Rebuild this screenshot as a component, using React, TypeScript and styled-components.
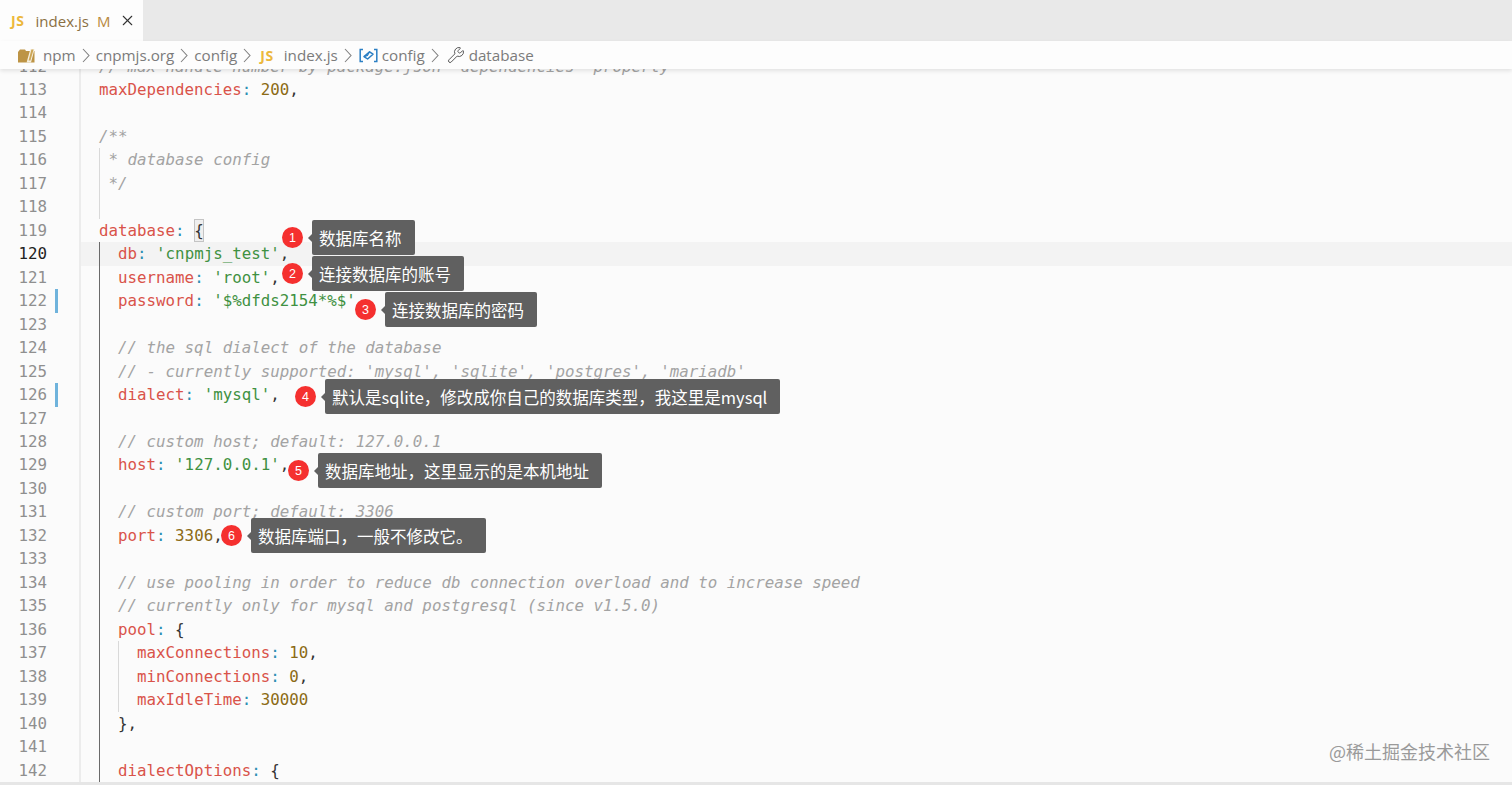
import React from 'react';
import styled, { createGlobalStyle } from 'styled-components';
import { Wrench, X } from 'lucide-react';

const Global = createGlobalStyle`
  html, body { margin: 0; padding: 0; height: 100%; overflow: hidden; background: #fbfbfb; }
  #root { height: 100%; }
`;

const uiFont = `"Open Sans", "Noto Sans", sans-serif`;
const cjkFont = `"Noto Sans CJK SC", "Noto Sans", sans-serif`;

const Page = styled.div`
  position: relative;
  display: flex;
  flex-direction: column;
  height: 785px;
  overflow: hidden;
  background: #fbfbfb;
`;

const TabBar = styled.div`
  display: flex;
  flex: none;
  height: 41px;
  background: #e9e9e9;
`;

const Tab = styled.div`
  display: flex;
  align-items: center;
  width: 143px;
  padding-left: 11px;
  box-sizing: border-box;
  background: #fdfdfd;
  font: 15px ${uiFont};
  color: #8f6c33;
`;

const JsMark = styled.span`
  font: 700 14px ${uiFont};
  color: #ecb83c;
  letter-spacing: 0.6px;
`;

const TabName = styled.span`
  margin-left: 11px;
  color: #8a6f42;
`;

const TabFlag = styled.span`
  margin-left: 8px;
  color: #b8893f;
`;

const TabClose = styled.span`
  display: flex;
  margin-left: 9px;
  color: #333;
`;

const Crumbs = styled.div`
  position: relative;
  z-index: 2;
  display: flex;
  flex: none;
  align-items: center;
  height: 28px;
  padding-left: 18px;
  background: #fdfdfd;
  box-shadow: 0 2px 4px rgba(0, 0, 0, 0.1);
  font: 15.2px ${uiFont};
  color: #7b7b7b;
`;

const CrumbGap = styled.span`
  display: flex;
  justify-content: center;
  width: 20px;
  color: #808080;
`;

const CrumbIcon = styled.span<{ $gap: number; $lead?: number }>`
  display: flex;
  align-items: center;
  margin-left: ${p => p.$lead ?? 0}px;
  margin-right: ${p => p.$gap}px;
`;

const Editor = styled.div`
  flex: 1;
  min-height: 0;
  overflow: hidden;
`;

const Lines = styled.div`
  margin-top: -14.5px;
`;

const Row = styled.div`
  display: flex;
  height: 23.48px;
  font: 15.8px/23.48px "DejaVu Sans Mono", monospace;
  white-space: pre;
`;

const Num = styled.span<{ $active?: boolean }>`
  flex: none;
  width: 47px;
  text-align: right;
  color: ${p => (p.$active ? '#222222' : '#8f8f8f')};
`;

const Diff = styled.span<{ $on?: boolean }>`
  flex: none;
  width: 3px;
  margin: 0 23px 0 8px;
  background: ${p => (p.$on ? '#6fb3dc' : 'transparent')};
`;

const Code = styled.div<{ $active?: boolean }>`
  display: flex;
  flex: 1;
  padding-left: 18px;
  border-left: 2px solid #ececec;
  margin-left: -2px;
  background: ${p => (p.$active ? '#f3f3f3' : 'transparent')};
`;

const Indent = styled.span<{ $guide: Guide }>`
  flex: none;
  width: 19.04px;
  box-sizing: border-box;
  border-left: 1px solid ${p => (p.$guide === 'dark' ? '#6a6a6a' : '#d9d9d9')};
`;

const HairGuide = styled.span`
  flex: none;
  width: 1px;
  margin-right: -1px;
  background: #d9d9d9;
`;

const Tok = styled.span<{ $k: TokenKind }>`
  color: ${p => tokenColors[p.$k]};
  font-style: ${p => (p.$k === 'c' ? 'italic' : 'normal')};
`;

const Bracket = styled.span`
  box-sizing: border-box;
  height: 23px;
  background: #efefef;
  outline: 1px solid #c4c4c4;
  outline-offset: -1px;
  color: #333333;
`;

const Note = styled.div<{ $x: number; $y: number }>`
  position: absolute;
  z-index: 3;
  left: ${p => p.$x}px;
  top: ${p => p.$y}px;
  display: flex;
  align-items: center;
  gap: 9px;
`;

const Badge = styled.span`
  display: flex;
  align-items: center;
  justify-content: center;
  width: 21px;
  height: 21px;
  border-radius: 50%;
  background: #f5302f;
  color: #ffffff;
  font: 12.5px "Liberation Sans", sans-serif;
`;

const Bubble = styled.span`
  position: relative;
  display: flex;
  align-items: center;
  height: 35px;
  padding: 0 13px 0 7px;
  border-radius: 2px;
  background: #606060;
  color: #ffffff;
  font: 16.5px ${cjkFont};
  white-space: nowrap;
  &::before {
    content: '';
    position: absolute;
    left: -4px;
    top: 50%;
    margin-top: -4px;
    border-style: solid;
    border-width: 4px 4px 4px 0;
    border-color: transparent #606060 transparent transparent;
  }
`;

const Watermark = styled.div`
  position: absolute;
  z-index: 3;
  right: 22px;
  top: 738px;
  font: 18px ${cjkFont};
  color: #9a9a9a;
  white-space: nowrap;
`;

const BottomStrip = styled.div`
  position: absolute;
  z-index: 3;
  left: 0;
  right: 0;
  bottom: 0;
  height: 3px;
  background: #e6e6e6;
`;

type TokenKind = 'k' | 's' | 'n' | 'p' | 'c' | 'x';
type Guide = 'dark' | 'light';

const tokenColors: Record<TokenKind, string> = {
  k: '#d9534a',
  s: '#3f9142',
  n: '#8b6a14',
  p: '#2c8fb3',
  c: '#a3a3a3',
  x: '#333333',
};

type Tk = [TokenKind, string];
interface Line {
  n: number;
  guides?: Guide[];
  hair?: boolean;
  tokens?: Tk[];
  bracket?: boolean;
  diff?: boolean;
  active?: boolean;
}

const D: Guide[] = ['dark'];

const kv = (key: string, kind: TokenKind, val: string, tail = ','): Tk[] => [
  ['k', key],
  ['p', ': '],
  [kind, val],
  ['x', tail],
];
const c = (t: string): Tk[] => [['c', t]];

const lines: Line[] = [
  { n: 112, tokens: c('// max handle number by package.json `dependencies` property') },
  { n: 113, tokens: kv('maxDependencies', 'n', '200') },
  { n: 114 },
  { n: 115, tokens: c('/**') },
  { n: 116, hair: true, tokens: c(' * database config') },
  { n: 117, hair: true, tokens: c(' */') },
  { n: 118, hair: true },
  { n: 119, tokens: [['k', 'database'], ['p', ': ']], bracket: true },
  { n: 120, guides: D, active: true, tokens: kv('db', 's', "'cnpmjs_test'") },
  { n: 121, guides: D, tokens: kv('username', 's', "'root'") },
  { n: 122, guides: D, diff: true, tokens: [['k', 'password'], ['p', ': '], ['s', "'$%dfds2154*%$'"]] },
  { n: 123, guides: D },
  { n: 124, guides: D, tokens: c('// the sql dialect of the database') },
  { n: 125, guides: D, tokens: c("// - currently supported: 'mysql', 'sqlite', 'postgres', 'mariadb'") },
  { n: 126, guides: D, diff: true, tokens: kv('dialect', 's', "'mysql'") },
  { n: 127, guides: D },
  { n: 128, guides: D, tokens: c('// custom host; default: 127.0.0.1') },
  { n: 129, guides: D, tokens: kv('host', 's', "'127.0.0.1'") },
  { n: 130, guides: D },
  { n: 131, guides: D, tokens: c('// custom port; default: 3306') },
  { n: 132, guides: D, tokens: kv('port', 'n', '3306') },
  { n: 133, guides: D },
  { n: 134, guides: D, tokens: c('// use pooling in order to reduce db connection overload and to increase speed') },
  { n: 135, guides: D, tokens: c('// currently only for mysql and postgresql (since v1.5.0)') },
  { n: 136, guides: D, tokens: [['k', 'pool'], ['p', ': '], ['x', '{']] },
  { n: 137, guides: ['dark', 'light'], tokens: kv('maxConnections', 'n', '10') },
  { n: 138, guides: ['dark', 'light'], tokens: kv('minConnections', 'n', '0') },
  { n: 139, guides: ['dark', 'light'], tokens: [['k', 'maxIdleTime'], ['p', ': '], ['n', '30000']] },
  { n: 140, guides: D, tokens: [['x', '},']] },
  { n: 141, guides: D },
  { n: 142, guides: D, tokens: [['k', 'dialectOptions'], ['p', ': '], ['x', '{']] },
];

const notes = [
  { i: 1, x: 282, y: 220, text: '数据库名称' },
  { i: 2, x: 282, y: 256, text: '连接数据库的账号' },
  { i: 3, x: 355, y: 292, text: '连接数据库的密码' },
  { i: 4, x: 295, y: 379, text: '默认是sqlite，修改成你自己的数据库类型，我这里是mysql' },
  { i: 5, x: 288, y: 453, text: '数据库地址，这里显示的是本机地址' },
  { i: 6, x: 221, y: 518, text: '数据库端口，一般不修改它。' },
];

const PackageIcon = () => (
  <svg width="17" height="15" viewBox="0 0 17 15">
    <path d="M0 4 L2 1.5 H7 L8 3 H16.5 V14.5 H0 Z" fill="#bd9445" />
    <path d="M8.6 14.5 L12.4 1 H16.6 L13 14.5 Z" fill="#f6f0e0" />
    <path d="M13.4 1.6 H15.6 L12.4 12.6 H10.6 Z" fill="#cda655" />
  </svg>
);

const FieldIcon = () => (
  <svg width="19" height="15" viewBox="0 0 19 15" fill="none">
    <path d="M4 1.5 H1.2 V13.5 H4 M15 1.5 H17.8 V13.5 H15" stroke="#2b7fc4" strokeWidth="1.5" />
    <path d="M5 8.6 L10.6 3.8 L14 6.2 L8.6 11 Z" stroke="#2b7fc4" strokeWidth="1.5" strokeLinejoin="round" />
    <path d="M5 8.6 L8.4 7.4 L10.6 3.8" stroke="#2b7fc4" strokeWidth="1.2" />
  </svg>
);

const Chevron = () => (
  <CrumbGap>
    <svg width="8" height="15" viewBox="0 0 8 15" fill="none">
      <path d="M1 1 L7 7.5 L1 14" stroke="currentColor" strokeWidth="1.1" />
    </svg>
  </CrumbGap>
);

export default function App() {
  return (
    <Page>
      <Global />
      <TabBar>
        <Tab>
          <JsMark>JS</JsMark>
          <TabName>index.js</TabName>
          <TabFlag>M</TabFlag>
          <TabClose>
            <X size={17} strokeWidth={1.5} />
          </TabClose>
        </Tab>
      </TabBar>
      <Crumbs>
        <CrumbIcon $gap={8}>
          <PackageIcon />
        </CrumbIcon>
        <span>npm</span>
        <Chevron />
        <span>cnpmjs.org</span>
        <Chevron />
        <span>config</span>
        <Chevron />
        <CrumbIcon $lead={3} $gap={10}>
          <JsMark>JS</JsMark>
        </CrumbIcon>
        <span>index.js</span>
        <Chevron />
        <CrumbIcon $lead={1} $gap={4}>
          <FieldIcon />
        </CrumbIcon>
        <span>config</span>
        <Chevron />
        <CrumbIcon $lead={2} $gap={4}>
          <Wrench size={18} strokeWidth={1.3} color="#555555" />
        </CrumbIcon>
        <span>database</span>
      </Crumbs>
      <Editor>
        <Lines>
          {lines.map(l => (
            <Row key={l.n}>
              <Num $active={l.active}>{l.n}</Num>
              <Diff $on={l.diff} />
              <Code $active={l.active}>
                {l.hair && <HairGuide />}
                {(l.guides ?? []).map((g, i) => (
                  <Indent key={i} $guide={g} />
                ))}
                <span>
                  {(l.tokens ?? []).map(([k, t], i) => (
                    <Tok key={i} $k={k}>
                      {t}
                    </Tok>
                  ))}
                </span>
                {l.bracket && <Bracket>{'{'}</Bracket>}
              </Code>
            </Row>
          ))}
        </Lines>
      </Editor>
      {notes.map(n => (
        <Note key={n.i} $x={n.x} $y={n.y}>
          <Badge>{n.i}</Badge>
          <Bubble>{n.text}</Bubble>
        </Note>
      ))}
      <Watermark>@稀土掘金技术社区</Watermark>
      <BottomStrip />
    </Page>
  );
}
